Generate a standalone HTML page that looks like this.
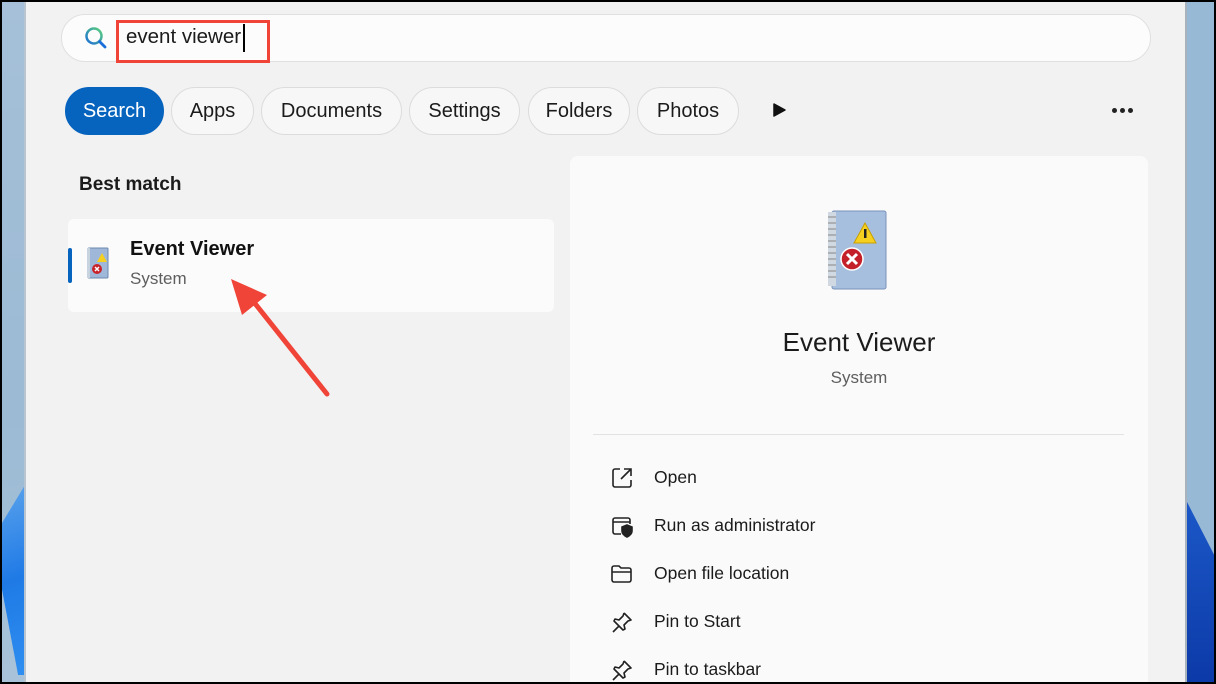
<!DOCTYPE html>
<html><head><style>
*{margin:0;padding:0;box-sizing:border-box}
html,body{width:1216px;height:684px;overflow:hidden}
body{background:#000;font-family:"Segoe UI","Liberation Sans",sans-serif;position:relative}
.abs{position:absolute}
.pill{position:absolute;top:87px;height:48px;border:1px solid #dcdcdc;border-radius:24px;background:#f7f7f7;font-size:20px;color:#1b1b1b;line-height:46px;text-align:center}
.act{position:absolute;left:654px;font-size:17.5px;color:#1b1b1b}
</style></head><body>
<div class="abs" style="left:2px;top:2px;width:1212px;height:680px;background:#f2f2f2"></div>
<div class="abs" style="left:2px;top:2px;width:23px;height:680px;background:linear-gradient(#a5c0d8,#9cbad4 60%,#a8c3d9)"></div>
<div class="abs" style="left:2px;top:485px;width:23px;height:190px;background:linear-gradient(160deg,#5aa2ec,#1f7ae6 50%,#2e8ef0);clip-path:polygon(100% 0,100% 100%,70% 100%,0 55%,0 20%)"></div>
<div class="abs" style="left:24px;top:2px;width:2px;height:680px;background:#b8c4cf"></div>
<div class="abs" style="left:1186px;top:2px;width:28px;height:680px;background:#97b9d5"></div>
<div class="abs" style="left:1186px;top:500px;width:28px;height:182px;background:linear-gradient(#1c58c8,#0c3aa8);clip-path:polygon(0 0,100% 30%,100% 100%,0 100%)"></div>
<div class="abs" style="left:1185px;top:2px;width:2px;height:680px;background:#a9b3bd"></div>

<div class="abs" style="left:61px;top:14px;width:1090px;height:48px;border:1px solid #e0e0e0;border-radius:24px;background:#fcfcfc"></div>
<svg class="abs" style="left:84px;top:26px" width="24" height="24" viewBox="0 0 24 24"><circle cx="10" cy="10" r="7.5" fill="none" stroke="url(#g)" stroke-width="2.5"/><line x1="15.5" y1="15.5" x2="21" y2="21" stroke="#1b6fd8" stroke-width="2.8" stroke-linecap="round"/><defs><linearGradient id="g" x1="0" y1="1" x2="1" y2="0"><stop offset="0" stop-color="#1b6fd8"/><stop offset="1" stop-color="#5bd07a"/></linearGradient></defs></svg>
<div class="abs" style="left:116px;top:20px;width:154px;height:43px;border:3px solid #f04438"></div>
<div class="abs" style="left:126px;top:25px;font-size:20.5px;color:#1b1b1b">event viewer</div>
<div class="abs" style="left:243px;top:24px;width:2px;height:28px;background:#000"></div>

<div class="pill" style="left:65px;width:99px;background:#0663be;border-color:#0663be;color:#fff">Search</div>
<div class="pill" style="left:171px;width:83px">Apps</div>
<div class="pill" style="left:261px;width:141px">Documents</div>
<div class="pill" style="left:409px;width:111px">Settings</div>
<div class="pill" style="left:528px;width:102px">Folders</div>
<div class="pill" style="left:637px;width:102px">Photos</div>
<svg class="abs" style="left:773px;top:102px" width="14" height="16"><path d="M1 2 L12 8 L1 14Z" fill="#111" stroke="#111" stroke-width="1.5" stroke-linejoin="round"/></svg>
<div class="abs" style="left:1112px;top:108px;width:5px;height:5px;border-radius:50%;background:#222;box-shadow:8px 0 #222,16px 0 #222"></div>

<div class="abs" style="left:79px;top:174px;font-size:19px;font-weight:600;color:#1b1b1b">Best match</div>
<div class="abs" style="left:68px;top:219px;width:486px;height:93px;background:#fbfbfb;border-radius:6px"></div>
<div class="abs" style="left:68px;top:248px;width:4px;height:35px;background:#0663be;border-radius:2px"></div>
<svg class="abs" style="left:86px;top:247px" width="28" height="36" viewBox="0 0 28 36"><rect x="2" y="1" width="20" height="30" rx="1" fill="#9fb7d8" stroke="#6e89b0"/><rect x="1" y="1" width="3" height="30" fill="#c8d3e0"/><path d="M16 6 L21 15 L11 15Z" fill="#f5d020"/><circle cx="11" cy="22" r="5" fill="#c8222a"/><path d="M9 20 L13 24 M13 20 L9 24" stroke="#fff" stroke-width="1.5"/></svg>
<div class="abs" style="left:130px;top:238px;font-size:20px;font-weight:600;color:#111">Event Viewer</div>
<div class="abs" style="left:130px;top:269px;font-size:17px;color:#5e5e5e">System</div>
<svg class="abs" style="left:225px;top:275px" width="110" height="125"><line x1="102" y1="119" x2="28" y2="26" stroke="#f04438" stroke-width="5" stroke-linecap="round"/><path d="M6 4 L42 20 L17 40Z" fill="#f04438"/></svg>

<div class="abs" style="left:570px;top:156px;width:578px;height:526px;background:#fafafa;border-radius:8px 8px 0 0"></div>
<svg class="abs" style="left:826px;top:209px" width="70" height="85" viewBox="0 0 70 85"><rect x="6" y="2" width="54" height="78" rx="2" fill="#a7bfdf" stroke="#7891b8"/><rect x="2" y="3" width="8" height="74" fill="#d0d8e2"/><g stroke="#888" stroke-width="1"><line x1="2" y1="8" x2="10" y2="8"/><line x1="2" y1="14" x2="10" y2="14"/><line x1="2" y1="20" x2="10" y2="20"/><line x1="2" y1="26" x2="10" y2="26"/><line x1="2" y1="32" x2="10" y2="32"/><line x1="2" y1="38" x2="10" y2="38"/><line x1="2" y1="44" x2="10" y2="44"/><line x1="2" y1="50" x2="10" y2="50"/><line x1="2" y1="56" x2="10" y2="56"/><line x1="2" y1="62" x2="10" y2="62"/><line x1="2" y1="68" x2="10" y2="68"/></g><path d="M39 14 L50 34 L28 34Z" fill="#f5d020" stroke="#c9a000"/><rect x="38" y="20" width="2.5" height="9" fill="#222"/><circle cx="26" cy="50" r="11" fill="#c4202a" stroke="#fff" stroke-width="1.5"/><path d="M21 45 L31 55 M31 45 L21 55" stroke="#fff" stroke-width="3"/></svg>
<div class="abs" style="left:570px;top:327px;width:578px;text-align:center;font-size:26px;color:#1b1b1b">Event Viewer</div>
<div class="abs" style="left:570px;top:368px;width:578px;text-align:center;font-size:17px;color:#5e5e5e">System</div>
<div class="abs" style="left:593px;top:434px;width:531px;height:1px;background:#e2e2e2"></div>

<svg class="abs" style="left:610px;top:466px" width="24" height="24" viewBox="0 0 24 24" fill="none" stroke="#222" stroke-width="1.6"><path d="M10 3H5a2 2 0 0 0-2 2v14a2 2 0 0 0 2 2h14a2 2 0 0 0 2-2v-5"/><path d="M14 3h7v7M21 3l-10 10"/></svg>
<div class="act" style="top:467px">Open</div>
<svg class="abs" style="left:610px;top:514px" width="24" height="24" viewBox="0 0 24 24" fill="none" stroke="#222" stroke-width="1.6"><path d="M11 20H5a2 2 0 0 1-2-2V6a2 2 0 0 1 2-2h13a2 2 0 0 1 2 2v4M3 8h17"/><path d="M12 13l5-2 5 2v4c0 3-3 5-5 6-2-1-5-3-5-6z" fill="#222"/></svg>
<div class="act" style="top:515px">Run as administrator</div>
<svg class="abs" style="left:610px;top:562px" width="24" height="24" viewBox="0 0 24 24" fill="none" stroke="#222" stroke-width="1.6"><path d="M2 6a2 2 0 0 1 2-2h5l2 2h8a2 2 0 0 1 2 2v10a2 2 0 0 1-2 2H4a2 2 0 0 1-2-2z"/><path d="M2 10h19"/></svg>
<div class="act" style="top:563px">Open file location</div>
<svg class="abs" style="left:610px;top:610px" width="24" height="24" viewBox="0 0 24 24" fill="none" stroke="#222" stroke-width="1.6" stroke-linejoin="round"><path d="M14 3l7 7-3 1-4 4 1 4-2 1-4-4-6 6M14 3l-1 3-4 4-4-1-1 2 5 5"/></svg>
<div class="act" style="top:611px">Pin to Start</div>
<div class="abs" style="left:0;top:654px;width:1216px;height:28px;overflow:hidden">
<svg class="abs" style="left:610px;top:4px" width="24" height="24" viewBox="0 0 24 24" fill="none" stroke="#222" stroke-width="1.6" stroke-linejoin="round"><path d="M14 3l7 7-3 1-4 4 1 4-2 1-4-4-6 6M14 3l-1 3-4 4-4-1-1 2 5 5"/></svg>
<div class="act" style="top:5px">Pin to taskbar</div>
</div>

<div class="abs" style="left:0;top:682px;width:1216px;height:2px;background:#000"></div>
</body></html>
